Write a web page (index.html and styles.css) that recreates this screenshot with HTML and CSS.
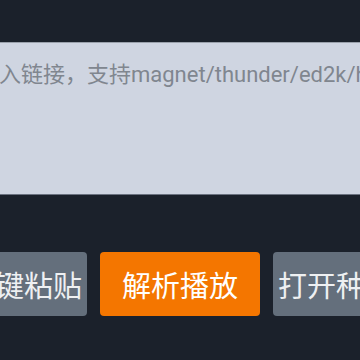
FILE: index.html
```html
<!DOCTYPE html>
<html lang="zh-CN">
  <head>
    <meta charset="UTF-8" />
    <meta name="viewport" content="width=device-width, initial-scale=1.0" />
    <title>链接播放</title>
    <link rel="stylesheet" href="styles.css">
  </head>
  <body>
    <main class="play-panel">
      <textarea class="link-input" placeholder="请输入链接，支持magnet/thunder/ed2k/http"></textarea>
      <div class="btn-row">
        <button class="btn btn-gray btn-paste">一键粘贴</button>
        <button class="btn btn-orange">解析播放</button>
        <button class="btn btn-gray btn-torrent">打开种子</button>
      </div>
    </main>
  </body>
</html>
```

FILE: styles.css
```css
* {
  margin: 0;
  padding: 0;
  box-sizing: border-box;
}

body {
  background-color: #1b212b;
  font-family: Roboto, "Noto Sans CJK SC", sans-serif;
  overflow: hidden;
}

.play-panel {
  width: 360px;
  display: flex;
  flex-direction: column;
  align-items: center;
  padding-top: 42px;
}

.link-input {
  flex-shrink: 0;
  width: 506px;
  height: 153px;
  padding: 15px 16px 13px 28px;
  border: none;
  border-top: 1px solid #9aa1ab;
  border-bottom: 1px solid #6b7280;
  background-color: #cfd5e1;
  font-family: Roboto, "Noto Sans CJK SC", sans-serif;
  font-size: 22px;
  line-height: 33px;
  color: #333;
  resize: none;
  outline: none;
}

.link-input::placeholder {
  color: #80868f;
}

.btn-row {
  flex-shrink: 0;
  display: flex;
  gap: 13px;
  margin-top: 57px;
}

.btn {
  width: 160px;
  height: 64px;
  padding: 0 5px;
  border: none;
  border-radius: 4px;
  font-family: "Noto Sans CJK SC", sans-serif;
  font-size: 29px;
  color: #eef0f2;
}

.btn-paste {
  text-align: right;
}

.btn-torrent {
  text-align: left;
}

.btn-gray {
  background-color: #646f7c;
}

.btn-orange {
  background-color: #f47600;
  color: #fff;
}
```
